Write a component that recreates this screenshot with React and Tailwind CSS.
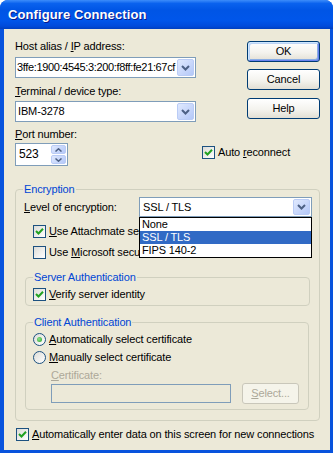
import React from 'react'

const U = ({ children }) => <span className="underline underline-offset-[1px]">{children}</span>

function Check({ checked }) {
  return (
    <span className="w-[13px] h-[13px] shrink-0 border border-[#1C5180] bg-[linear-gradient(135deg,#DCDCD7,#FFFFFF)] flex items-center justify-center">
      {checked && (
        <svg width="9" height="9" viewBox="0 0 9 9">
          <path d="M1 4 L3.5 6.5 L8 1.8" fill="none" stroke="#21A121" strokeWidth="2" />
        </svg>
      )}
    </span>
  )
}

function Radio({ checked }) {
  return (
    <span className="w-[13px] h-[13px] shrink-0 rounded-full border border-[#1C5180] bg-[linear-gradient(135deg,#DCDCD7,#FFFFFF)] flex items-center justify-center">
      {checked && <span className="w-[5px] h-[5px] rounded-full bg-[radial-gradient(circle_at_40%_40%,#8FE38F,#21A121)]" />}
    </span>
  )
}

function ArrowBtn() {
  return (
    <span className="shrink-0 w-[17px] my-[1px] mr-[1px] rounded-[2px] border border-[#BACCF6] bg-[linear-gradient(135deg,#E0E9FE,#B4C8F8)] flex items-center justify-center">
      <svg width="9" height="6" viewBox="0 0 9 6">
        <path d="M1 1 L4.5 4.5 L8 1" fill="none" stroke="#4D6185" strokeWidth="2" />
      </svg>
    </span>
  )
}

function Btn({ children, def }) {
  return (
    <button
      className={`w-[73px] h-[21px] rounded-[3px] border border-[#003C74] bg-[linear-gradient(180deg,#FFFFFF_0%,#F4F3EE_55%,#E2DFD4_100%)] text-black flex items-center justify-center ${
        def ? 'shadow-[inset_1px_1px_0_#CEE7FF,inset_-1px_-1px_0_#6982EE,inset_2px_2px_0_#BCD4F6,inset_-2px_-2px_0_#89ADE4]' : ''
      }`}
    >
      {children}
    </button>
  )
}

export default function App() {
  return (
    <div className="w-[333px] h-[453px] bg-white overflow-hidden font-['Liberation_Sans',Arial,sans-serif] text-[11px] leading-[13px] tracking-[-0.14px] text-black">
      <div className="h-full flex flex-col rounded-t-[8px] overflow-hidden bg-[#0853DD]">
        {/* Title bar */}
        <div className="h-[29px] shrink-0 flex items-center pl-[8px] bg-[linear-gradient(180deg,#3D8DFA_0%,#0A62EE_12%,#0055E5_35%,#0056EA_70%,#004BDB_90%,#003FBF_100%)]">
          <span className="text-white font-bold text-[13px] tracking-[0.1px] [text-shadow:1px_1px_0_#0A1A8C]">Configure Connection</span>
        </div>

        {/* Client area */}
        <div className="flex-1 ml-[4px] mr-[3px] mb-[3px] bg-[#ECE9D8] flex flex-col">
          {/* Top section */}
          <div className="flex pt-[11px] pl-[11px] pr-[10px]">
            <div className="w-[181px] flex flex-col">
              <span>Host alias / <U>I</U>P address:</span>
              <div className="mt-[4px] h-[21px] w-full border border-[#7F9DB9] bg-white flex">
                <span className="flex-1 min-w-0 pl-[1px] flex items-center overflow-hidden whitespace-nowrap tracking-[-0.35px]">3ffe:1900:4545:3:200:f8ff:fe21:67cf</span>
                <ArrowBtn />
              </div>
              <span className="mt-[7px]"><U>T</U>erminal / device type:</span>
              <div className="mt-[3px] h-[21px] w-full border border-[#7F9DB9] bg-white flex">
                <span className="flex-1 pl-[2px] flex items-center">IBM-3278</span>
                <ArrowBtn />
              </div>
              <span className="mt-[6px]"><U>P</U>ort number:</span>
              <div className="mt-[2px] h-[23px] w-[53px] border border-[#7F9DB9] bg-white flex">
                <span className="flex-1 pl-[3px] flex items-center text-[12px]">523</span>
                <div className="w-[15px] my-[1px] mr-[1px] flex flex-col gap-[1px]">
                  <span className="flex-1 rounded-[2px] border border-[#BACCF6] bg-[linear-gradient(135deg,#E0E9FE,#B4C8F8)] flex items-center justify-center">
                    <svg width="7" height="4" viewBox="0 0 7 4"><path d="M0.5 3.5 L3.5 0.8 L6.5 3.5" fill="none" stroke="#4D6185" strokeWidth="1.5" /></svg>
                  </span>
                  <span className="flex-1 rounded-[2px] border border-[#BACCF6] bg-[linear-gradient(135deg,#E0E9FE,#B4C8F8)] flex items-center justify-center">
                    <svg width="7" height="4" viewBox="0 0 7 4"><path d="M0.5 0.5 L3.5 3.2 L6.5 0.5" fill="none" stroke="#4D6185" strokeWidth="1.5" /></svg>
                  </span>
                </div>
              </div>
            </div>

            <div className="flex-1 flex flex-col">
              <div className="self-end mt-[1px]"><Btn def>OK</Btn></div>
              <div className="self-end mt-[7px]"><Btn>Cancel</Btn></div>
              <div className="self-end mt-[8px]"><Btn>Help</Btn></div>
              <div className="mt-[27px] pl-[6px] flex items-center gap-[3px]">
                <Check checked />
                <span>Auto <U>r</U>econnect</span>
              </div>
            </div>
          </div>

          {/* Encryption */}
          <fieldset className="mt-[17px] ml-[11px] mr-[10px] border border-[#D0D0BF] rounded-[4px] pb-[10px]">
            <legend className="ml-[7px] px-[1px] text-[#0046D5]">Encryption</legend>

            <div className="mt-[1px] pl-[8px] pr-[7px] flex items-center">
              <span className="flex-1"><U>L</U>evel of encryption:</span>
              <div className="relative w-[173px] h-[20px] border border-[#7F9DB9] bg-white flex">
                <span className="flex-1 pl-[3px] flex items-center">SSL / TLS</span>
                <ArrowBtn />
                <div className="absolute left-[-1px] top-[19px] w-[173px] z-10 border border-black bg-white">
                  <div className="h-[13px] pl-[2px]">None</div>
                  <div className="h-[13px] pl-[2px] bg-[#316AC5] text-white">SSL / TLS</div>
                  <div className="h-[13px] pl-[2px]">FIPS 140-2</div>
                </div>
              </div>
            </div>

            <div className="mt-[8px] pl-[17px] flex items-center gap-[3px]">
              <Check checked />
              <span><U>U</U>se Attachmate security proxy</span>
            </div>
            <div className="mt-[8px] pl-[17px] flex items-center gap-[3px]">
              <Check />
              <span>Use <U>M</U>icrosoft security proxy</span>
            </div>

            {/* Server Authentication */}
            <fieldset className="mt-[12px] ml-[9px] mr-[9px] border border-[#D0D0BF] rounded-[4px] pb-[4px]">
              <legend className="ml-[7px] px-[1px] text-[#0046D5]">Server Authentication</legend>
              <div className="mt-[4px] pl-[7px] flex items-center gap-[3px]">
                <Check checked />
                <span><U>V</U>erify server identity</span>
              </div>
            </fieldset>

            {/* Client Authentication */}
            <fieldset className="mt-[10px] ml-[9px] mr-[10px] border border-[#D0D0BF] rounded-[4px] pb-[5px]">
              <legend className="ml-[7px] px-[1px] text-[#0046D5]">Client Authentication</legend>
              <div className="mt-[4px] pl-[7px] flex items-center gap-[3px]">
                <Radio checked />
                <span><U>A</U>utomatically select certificate</span>
              </div>
              <div className="mt-[5px] pl-[7px] flex items-center gap-[3px]">
                <Radio />
                <span><U>M</U>anually select certificate</span>
              </div>
              <div className="mt-[5px] pl-[25px] text-[#ACA899]"><U>C</U>ertificate:</div>
              <div className="mt-[1px] pl-[25px] h-[21px] flex items-center">
                <div className="w-[180px] h-[19px] border border-[#7F9DB9] bg-[#ECE9D8]" />
                <button className="ml-[11px] w-[57px] h-[21px] rounded-[3px] border border-[#C9C7BA] bg-[#F5F4EA] text-[#ACA899] flex items-center justify-center">
                  <span><U>S</U>elect...</span>
                </button>
              </div>
            </fieldset>
          </fieldset>

          {/* Bottom checkbox */}
          <div className="mt-[7px] ml-[12px] flex items-center gap-[3px]">
            <Check checked />
            <span><U>A</U>utomatically enter data on this screen for new connections</span>
          </div>
        </div>
      </div>
    </div>
  )
}
